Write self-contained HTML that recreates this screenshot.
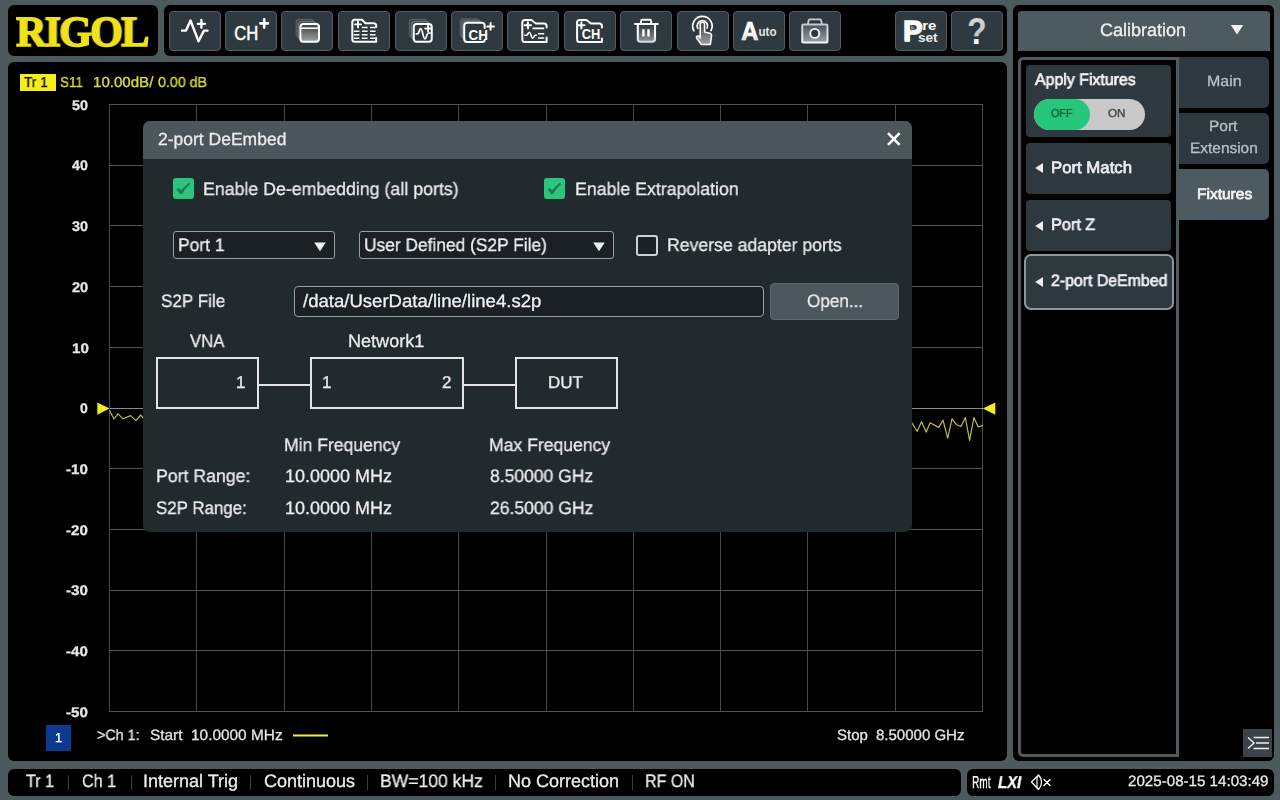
<!DOCTYPE html>
<html lang="en">
<head>
<meta charset="utf-8">
<title>RIGOL VNA - 2-port DeEmbed</title>
<style>
*{box-sizing:border-box;margin:0;padding:0}
html,body{width:1280px;height:800px;overflow:hidden;background:#4d5a5d}
body{position:relative;font-family:"Liberation Sans",sans-serif;color:#e8e8e8;font-size:17px}
.abs{position:absolute}
.blk{position:absolute;background:#000;border-radius:6px}
.t{position:absolute;white-space:nowrap;line-height:1;transform-origin:0 0;text-rendering:geometricPrecision;will-change:transform;-webkit-text-stroke:.3px}
/* toolbar buttons */
.tb{position:absolute;top:11px;width:52px;height:40px;background:#2f3a40;border:1px solid #515d62;border-radius:4px}
.tb svg{position:absolute;left:-1px;top:-1px}
/* right menu */
.mbtn{position:absolute;left:1026px;width:145px;background:#2e393f;border-radius:4px}
.tab{position:absolute;left:1179px;width:90px;height:51px;background:#2e393f;border-radius:0 5px 5px 0}
/* dialog */
#dlg{position:absolute;left:143px;top:121px;width:769px;height:411px;background:#212a2d;border-radius:7px;overflow:hidden}
#dlg .ttl{position:absolute;left:0;top:0;width:769px;height:38px;background:#4a565a}
.cb{position:absolute;width:21px;height:21px;border-radius:3px;background:#2bc57e}
.sel{position:absolute;height:28px;border:1px solid #9aa0a2;border-radius:3px;background:#1a2023}
.box{position:absolute;border:2px solid #e4e4e4}
</style>
</head>
<body>
<!-- logo -->
<div class="blk" style="left:8px;top:5px;width:150px;height:51px"></div>
<div class="t" id="logo" style="left:16px;top:11px;font-family:'Liberation Serif',serif;font-weight:bold;font-size:43px;color:#f0e21a;letter-spacing:-2px;-webkit-text-stroke:1.5px #f0e21a;transform:scaleX(.985)">RIGOL</div>
<!-- toolbar -->
<div class="blk" style="left:164px;top:5px;width:843px;height:51px"></div>
<!-- toolbar buttons -->
<div class="tb" style="left:169px"><svg width="52" height="40" viewBox="0 0 52 40" fill="none" stroke="#fff" stroke-width="2.400" stroke-linecap="round" stroke-linejoin="round"><path d="M13 19.6H17L21.5 9.5L29.500 30.300L35 19.6H38.500"/><path d="M28.800 12.800H36M32.400 9V16.800" stroke-width="2.300"/></svg></div>
<div class="tb" style="left:225px"><svg width="52" height="40" viewBox="0 0 52 40"><text x="9.200" y="28.800" font-family="Liberation Sans, sans-serif" font-size="19.800" fill="#fff" stroke="#fff" stroke-width=".5" textLength="24" lengthAdjust="spacingAndGlyphs">CH</text><path d="M35.400 12.400H43M39.200 8.300V16.600" stroke="#fff" stroke-width="2.600" stroke-linecap="round"/></svg></div>
<div class="tb" style="left:281px"><svg width="52" height="40" viewBox="0 0 52 40"><defs><linearGradient id="gw" x1="0" y1="0" x2="0" y2="1"><stop offset="0" stop-color="#353e42"/><stop offset="1" stop-color="#9ea4a6"/></linearGradient></defs><rect x="15.300" y="8.500" width="17.500" height="17.500" rx="3" fill="#3a4449" stroke="#525d62" stroke-width="1.400"/><rect x="17.300" y="10.600" width="17.500" height="17.500" rx="3" fill="#3a4449" stroke="#69747a" stroke-width="1.400"/><rect x="19.400" y="13" width="18.600" height="17.800" rx="3" fill="url(#gw)" stroke="#fff" stroke-width="2"/><path d="M19.400 17.200H38" stroke="#fff" stroke-width="1.500"/></svg></div>
<div class="tb" style="left:338px"><svg width="52" height="40" viewBox="0 0 52 40" fill="none" stroke="#fff" stroke-width="2" stroke-linecap="round" stroke-linejoin="round"><path d="M38.200 27V30.700H16.800Q14.300 30.700 14.300 28.200V11.200Q14.300 8.700 16.800 8.700H24L27.500 12.300H35.700Q38.200 12.300 38.200 14.800V16"/><path d="M17 13.400H23M20 10.400V16.400" stroke-width="1.900"/><path d="M23.900 16.500H38M15.750 20.200H38M15.750 23.700H38M15.750 27.200H38" stroke-width="1.600" stroke-dasharray="5.700 2.400" stroke-linecap="butt"/></svg></div>
<div class="tb" style="left:395px"><svg width="52" height="40" viewBox="0 0 52 40" fill="none" stroke-linecap="round" stroke-linejoin="round"><rect x="14.500" y="8.500" width="17.500" height="17.500" rx="3" fill="#3a4449" stroke="#525d62" stroke-width="1.400"/><rect x="16.600" y="10.600" width="17.500" height="17.500" rx="3" fill="#3a4449" stroke="#69747a" stroke-width="1.400"/><rect x="18.750" y="13" width="18" height="17.800" rx="3" fill="#2f3a40" stroke="#fff" stroke-width="2"/><path d="M21.300 22.800H22.500C24.500 22.800 24 17.600 25.700 17.600C27.600 17.600 28 27.800 30 27.800C31.700 27.800 31.600 22 33.500 22H35.300" stroke="#fff" stroke-width="1.700"/><path d="M30.200 17.500H36M33.100 14.600V20.400" stroke="#fff" stroke-width="1.800"/></svg></div>
<div class="tb" style="left:451px"><svg width="52" height="40" viewBox="0 0 52 40" fill="none" stroke-linecap="round" stroke-linejoin="round"><rect x="9.400" y="8" width="19" height="18" rx="3" fill="#3a4449" stroke="#525d62" stroke-width="1.400"/><rect x="11.300" y="9.900" width="19" height="18" rx="3" fill="#3a4449" stroke="#69747a" stroke-width="1.400"/><path d="M33.700 17V14.800Q33.700 11.800 30.700 11.800H16.200Q13.200 11.800 13.200 14.800V27.900Q13.200 30.900 16.200 30.900H30.700Q33.700 30.900 33.700 28.900" fill="#2f3a40" stroke="#fff" stroke-width="2"/><text x="17.600" y="28.500" font-family="Liberation Sans, sans-serif" font-weight="bold" font-size="15.500" fill="#fff" stroke="none" textLength="19.400" lengthAdjust="spacingAndGlyphs">CH</text><path d="M36.300 15.400H43M39.600 12V18.800" stroke="#fff" stroke-width="2"/></svg></div>
<div class="tb" style="left:507px"><svg width="52" height="40" viewBox="0 0 52 40" fill="none" stroke="#fff" stroke-width="2" stroke-linecap="round" stroke-linejoin="round"><path d="M39.600 26.500V30.900H17.800Q15.300 30.900 15.300 28.400V11.500Q15.300 9 17.800 9H24.400L28.800 12.500H37.100Q39.600 12.500 39.600 15V16.500"/><path d="M17.800 14.300H24M20.900 11.200V17.400" stroke-width="2.100"/><path d="M17.800 24.200H19.500C21 24.200 21 21.200 22.300 21.200C23.800 21.200 24.200 27.200 25.700 27.200C27 27.200 27 24.200 28.300 24.200H29.300" stroke-width="1.600"/><path d="M25.500 17.300H37.200M31 22.750H37.200M31 27H37.200" stroke-width="1.700" stroke-linecap="butt"/></svg></div>
<div class="tb" style="left:564px"><svg width="52" height="40" viewBox="0 0 52 40" fill="none" stroke="#fff" stroke-width="2" stroke-linecap="round" stroke-linejoin="round"><path d="M37.900 27.500V30.900H15.600Q13.100 30.900 13.100 28.400V11.500Q13.100 9 15.600 9H22.500L26.900 12.500H35.400Q37.900 12.500 37.900 15V16.500"/><path d="M14.300 14.300H20.500M17.400 11.200V17.400" stroke-width="2.100"/><text x="17.800" y="28.300" font-family="Liberation Sans, sans-serif" font-weight="bold" font-size="15.500" fill="#fff" stroke="none" textLength="18.600" lengthAdjust="spacingAndGlyphs">CH</text></svg></div>
<div class="tb" style="left:620px"><svg width="52" height="40" viewBox="0 0 52 40" fill="none" stroke-linecap="round" stroke-linejoin="round"><defs><linearGradient id="gt" x1="0" y1="0" x2="0" y2="1"><stop offset="0" stop-color="#fff"/><stop offset=".5" stop-color="#fff"/><stop offset="1" stop-color="#d5d8d9"/></linearGradient><linearGradient id="gt2" x1="0" y1="0" x2="0" y2="1"><stop offset="0" stop-color="#2f3a40"/><stop offset="1" stop-color="#8b9396"/></linearGradient></defs><path d="M21 12.500V10.300Q21 8.800 22.500 8.800H29.700Q31.200 8.800 31.200 10.300V12.500" stroke="#fff" stroke-width="1.900"/><path d="M15 13H37.700" stroke="#fff" stroke-width="2.200"/><path d="M17.800 14V28Q17.800 30.700 20.500 30.700H32.300Q35 30.700 35 28V14" stroke="url(#gt)" stroke-width="2.100" fill="url(#gt2)"/><path d="M23.400 18.200V25.600M28.500 18.200V25.600" stroke="#fff" stroke-width="2.400" stroke-linecap="butt"/></svg></div>
<div class="tb" style="left:677px"><svg width="52" height="40" viewBox="0 0 52 40" fill="none" stroke="#fff" stroke-width="1.700" stroke-linecap="round" stroke-linejoin="round"><defs><linearGradient id="gh" x1="0" y1="0" x2="0" y2="1"><stop offset="0" stop-color="#3a4449"/><stop offset="1" stop-color="#9aa1a4"/></linearGradient></defs><path d="M16.900 19.800A9.700 9.700 0 1 1 34 19.600"/><path d="M20.800 17.300A5.200 5.200 0 1 1 30.100 17.100"/><path d="M23.200 27V13.300Q23.200 11.300 25.400 11.300Q27.600 11.300 27.600 13.300V21L32.800 22.300Q34.800 22.800 34.500 25L33.300 33.500H24.300L19.800 27.300Q18.900 25.900 20.300 25.100Q21.500 24.600 22.400 25.800Z" fill="url(#gh)" stroke="#fff" stroke-width="1.600"/></svg></div>
<div class="tb" style="left:733px"><svg width="52" height="40" viewBox="0 0 52 40"><defs><linearGradient id="ga" x1="0" y1="0" x2="0" y2="1"><stop offset="0" stop-color="#fff"/><stop offset=".6" stop-color="#fff"/><stop offset="1" stop-color="#aeb4b6"/></linearGradient></defs><text x="8.200" y="28.500" font-family="Liberation Sans, sans-serif" font-weight="bold" font-size="25.800" fill="url(#ga)" stroke="#fff" stroke-width=".7" textLength="17.200" lengthAdjust="spacingAndGlyphs">A</text><text x="25.500" y="24.700" font-family="Liberation Sans, sans-serif" font-weight="bold" font-size="12.500" fill="#e4e6e7" textLength="18" lengthAdjust="spacingAndGlyphs">uto</text></svg></div>
<div class="tb" style="left:789px"><svg width="52" height="40" viewBox="0 0 52 40" fill="none" stroke-linecap="round" stroke-linejoin="round"><defs><linearGradient id="gc" x1="0" y1="0" x2="0" y2="1"><stop offset="0" stop-color="#475257"/><stop offset="1" stop-color="#9aa1a4"/></linearGradient><linearGradient id="gcs" x1="0" y1="0" x2="0" y2="1"><stop offset="0" stop-color="#c5c9cb"/><stop offset="1" stop-color="#f4f5f5"/></linearGradient></defs><path d="M19 12.500L19.700 9.300Q19.900 8.300 21 8.300H30.800Q31.900 8.300 32.100 9.300L32.800 12.500" stroke="#c9cdcf" stroke-width="1.800"/><rect x="13.250" y="13.400" width="25.200" height="18.100" rx="1" fill="url(#gc)" stroke="url(#gcs)" stroke-width="2"/><circle cx="25.750" cy="22.400" r="4.500" fill="#2f3a40" stroke="#f2f3f3" stroke-width="1.900"/></svg></div>
<div class="tb" style="left:895px"><svg width="52" height="40" viewBox="0 0 52 40"><text x="8.100" y="30.250" font-family="Liberation Sans, sans-serif" font-weight="bold" font-size="29.600" fill="#fff" stroke="#fff" stroke-width="1.300">P</text><path d="M16 14L20 17L16 20Z" fill="#7c858a"/><text x="27.300" y="18.500" font-family="Liberation Sans, sans-serif" font-weight="bold" font-size="12.600" fill="#fff" textLength="14" lengthAdjust="spacingAndGlyphs">re</text><text x="23" y="30.600" font-family="Liberation Sans, sans-serif" font-weight="bold" font-size="12.600" fill="#e9ebec" textLength="19.600" lengthAdjust="spacingAndGlyphs">set</text></svg></div>
<div class="tb" style="left:951px"><svg width="52" height="40" viewBox="0 0 52 40"><defs><linearGradient id="gq" x1="0" y1="0" x2="0" y2="1"><stop offset="0" stop-color="#e0e2e3"/><stop offset=".55" stop-color="#bfc4c6"/><stop offset=".8" stop-color="#fff"/><stop offset="1" stop-color="#fff"/></linearGradient></defs><text x="16.200" y="32.750" font-family="Liberation Sans, sans-serif" font-weight="bold" font-size="37.300" fill="url(#gq)" textLength="19.300" lengthAdjust="spacingAndGlyphs">?</text></svg></div>
<!-- plot panel -->
<div class="blk" style="left:8px;top:62px;width:999px;height:699px"></div>
<!-- right panel -->
<div class="blk" style="left:1013px;top:5px;width:261px;height:756px"></div>
<!-- status bars -->
<div class="blk" style="left:8px;top:769px;width:953px;height:27px"></div>
<div class="blk" style="left:967px;top:769px;width:307px;height:27px"></div>
<div class="abs" style="left:20px;top:74px;width:36px;height:17px;background:#f4ef1a"></div>
<svg class="abs" style="left:0;top:0" width="1280" height="800" viewBox="0 0 1280 800" fill="none"><g stroke="#474747" stroke-width="1" shape-rendering="crispEdges"><path d="M109.5 104.0V712.0"/><path d="M196.5 104.0V712.0"/><path d="M284.5 104.0V712.0"/><path d="M371.5 104.0V712.0"/><path d="M458.5 104.0V712.0"/><path d="M546.5 104.0V712.0"/><path d="M633.5 104.0V712.0"/><path d="M720.5 104.0V712.0"/><path d="M807.5 104.0V712.0"/><path d="M895.5 104.0V712.0"/><path d="M982.5 104.0V712.0"/></g><g stroke="#555" stroke-width="1" shape-rendering="crispEdges"><path d="M109.0 104.5H983.0"/><path d="M109.0 165.5H983.0"/><path d="M109.0 225.5H983.0"/><path d="M109.0 286.5H983.0"/><path d="M109.0 347.5H983.0"/><path d="M109.0 408.5H983.0"/><path d="M109.0 468.5H983.0"/><path d="M109.0 529.5H983.0"/><path d="M109.0 590.5H983.0"/><path d="M109.0 650.5H983.0"/><path d="M109.0 711.5H983.0"/></g><path d="M109.5 408.5H982.5" stroke="#8c8c8c" stroke-width="1" shape-rendering="crispEdges"/><path d="M109.5 410.5L114 419L118 413.8L123 418.8L130.600 415.600L136 420.600L140.600 415L143.500 418.500" stroke="#bcbc4a" stroke-width="1.2" stroke-linejoin="round"/><path d="M911 424L912 423.100L917.200 431.300L921.500 421.800L926.200 432.100L930.100 422.700L938.700 427.400L943 420.100L947.700 438.100L952 418.800L956.700 424.800L961 426.500L965.300 417.500L969.600 440.300L973.900 417.500L978.200 427L982.900 425.400" stroke="#bcbc4a" stroke-width="1.2" stroke-linejoin="round"/><path d="M97.3 402.500L109.500 408.500L97.300 414.800Z" fill="#f2ee1c"/><path d="M995.300 402.500L982.800 408.500L995.300 414.700Z" fill="#f2ee1c"/><path d="M293 735.600H328" stroke="#eeea50" stroke-width="2"/></svg>
<div class="abs" style="left:46px;top:725px;width:25px;height:26px;background:#0c3a8e"></div>
<div class="abs" style="left:68px;top:775px;width:1px;height:15px;background:#3c3c3c"></div><div class="abs" style="left:131px;top:775px;width:1px;height:15px;background:#3c3c3c"></div><div class="abs" style="left:250px;top:775px;width:1px;height:15px;background:#3c3c3c"></div><div class="abs" style="left:367px;top:775px;width:1px;height:15px;background:#3c3c3c"></div><div class="abs" style="left:495px;top:775px;width:1px;height:15px;background:#3c3c3c"></div><div class="abs" style="left:632px;top:775px;width:1px;height:15px;background:#3c3c3c"></div>
<svg class="abs" style="left:1028px;top:772px" width="26" height="20" viewBox="0 0 26 20" fill="none" stroke="#fff" stroke-width="1.200" stroke-linejoin="round" stroke-linecap="round"><path d="M3.500 10L10.500 3Q13.500 6 13.500 10.500Q13.500 14.500 10.500 17.500Z"/><path d="M9 4.500V16"/><path d="M16 7.500L22 13.500M22 7.500L16 13.500" stroke-width="1.400"/></svg>
<div class="abs" style="left:1018px;top:11px;width:252px;height:40px;background:#4d5a5f;border-radius:4px 4px 0 0"></div>
<svg class="abs" style="left:1229px;top:23px" width="16" height="13" viewBox="0 0 16 13"><path d="M1.800 2H14.200L8 11.500Z" fill="#f2f2f2"/></svg>
<div class="abs" style="left:1018px;top:57px;width:161px;height:700px;border:3px solid #4d5a5f;border-radius:5px 0 0 5px"></div>
<div class="tab" style="top:57px"></div><div class="tab" style="top:113px"></div><div class="tab" style="top:169px;background:#4d5a5f"></div>
<div class="mbtn" style="top:65px;height:72px"></div><div class="mbtn" style="top:143px;height:51px"></div><div class="mbtn" style="top:200px;height:51px"></div><div class="mbtn" style="left:1024px;top:253.500px;width:150px;height:56px;border:2px solid #8c969b;border-radius:7px"></div>
<div class="abs" style="left:1034px;top:99px;width:111px;height:31px;border-radius:16px;background:#c9c9c9;overflow:hidden"><div class="abs" style="left:0;top:0;width:56px;height:31px;border-radius:16px;background:#26c77b"></div></div>
<svg class="abs" style="left:1034px;top:162.2px" width="10" height="12" viewBox="0 0 10 12"><path d="M9 1V11L1.200 6Z" fill="#eee"/></svg><svg class="abs" style="left:1034px;top:219.8px" width="10" height="12" viewBox="0 0 10 12"><path d="M9 1V11L1.200 6Z" fill="#eee"/></svg><svg class="abs" style="left:1034px;top:275.8px" width="10" height="12" viewBox="0 0 10 12"><path d="M9 1V11L1.200 6Z" fill="#eee"/></svg>
<div class="abs" style="left:1243px;top:729px;width:29px;height:28px;background:#3a4448"></div><svg class="abs" style="left:1243px;top:729px" width="29" height="28" viewBox="0 0 29 28" fill="none" stroke="#f0f0f0" stroke-width="1.400"><path d="M5 8.500L11 14L5 19.500"/><path d="M10.500 8.500H26M13 14H26M10.500 19.500H26"/></svg>
<div id="dlg"><div class="ttl"></div></div>
<svg class="abs" style="left:884px;top:129px" width="20" height="20" viewBox="0 0 20 20"><path d="M4 4.200L15.600 15.800M15.600 4.200L4 15.800" stroke="#fff" stroke-width="2.600"/></svg>
<div class="cb" style="left:173px;top:178px"><svg width="21" height="21" viewBox="0 0 21 21" style="position:absolute;left:0;top:0"><path d="M3.500 11.200L6 9.800L8 12.500Q11.500 7.800 16 4.700L17.100 6Q12.400 10.200 9 16H6.900Q5.700 13.500 3.500 11.200Z" fill="#1f7a51"/></svg></div><div class="cb" style="left:544px;top:178px"><svg width="21" height="21" viewBox="0 0 21 21" style="position:absolute;left:0;top:0"><path d="M3.500 11.200L6 9.800L8 12.500Q11.500 7.800 16 4.700L17.100 6Q12.400 10.200 9 16H6.900Q5.700 13.500 3.500 11.200Z" fill="#1f7a51"/></svg></div>
<div class="sel" style="left:173px;top:231px;width:162px"><svg width="16" height="12" viewBox="0 0 16 12" style="position:absolute;right:6.300px;top:9px"><path d="M2.200 1.500H13.800L8 10.300Z" fill="#f0f0f0"/></svg></div><div class="sel" style="left:359px;top:231px;width:255px"><svg width="16" height="12" viewBox="0 0 16 12" style="position:absolute;right:6.300px;top:9px"><path d="M2.200 1.500H13.800L8 10.300Z" fill="#f0f0f0"/></svg></div>
<div class="abs" style="left:636px;top:235px;width:22px;height:21px;border:2px solid #cfd2d3;border-radius:3px;background:#1c2326"></div>
<div class="sel" style="left:294px;top:286px;width:470px;height:31px;border-radius:4px"></div>
<div class="abs" style="left:770px;top:283px;width:129px;height:37px;background:#4b575b;border:1px solid #5d696e;border-radius:4px"></div>
<div class="box" style="left:156px;top:357px;width:103px;height:52px"></div><div class="box" style="left:310px;top:357px;width:154px;height:52px"></div><div class="box" style="left:515px;top:357px;width:103px;height:52px"></div><div class="abs" style="left:259px;top:384px;width:51px;height:2px;background:#e4e4e4"></div><div class="abs" style="left:464px;top:384px;width:51px;height:2px;background:#e4e4e4"></div>
<!-- text -->
<span class="t" style="left:23.9px;top:76.0px;font-size:14.5px;transform:scaleX(0.940);color:#111">Tr 1</span>
<span class="t" style="left:59.8px;top:76.0px;font-size:14.5px;transform:scaleX(0.925);color:#dede3c">S11</span>
<span class="t" style="left:93.2px;top:76.0px;font-size:14.5px;transform:scaleX(1.040);color:#dede3c">10.00dB/</span>
<span class="t" style="left:158.0px;top:76.0px;font-size:14.5px;transform:scaleX(0.981);color:#dede3c">0.00 dB</span>
<span class="t" style="left:72.2px;top:98.0px;font-size:14px;transform:scaleX(1.028);font-weight:bold;color:#e6e6e6">50</span>
<span class="t" style="left:72.4px;top:158.0px;font-size:14px;transform:scaleX(1.013);font-weight:bold;color:#e6e6e6">40</span>
<span class="t" style="left:72.2px;top:219.0px;font-size:14px;transform:scaleX(1.028);font-weight:bold;color:#e6e6e6">30</span>
<span class="t" style="left:71.9px;top:280.0px;font-size:14px;transform:scaleX(1.043);font-weight:bold;color:#e6e6e6">20</span>
<span class="t" style="left:71.5px;top:341.0px;font-size:14px;transform:scaleX(1.076);font-weight:bold;color:#e6e6e6">10</span>
<span class="t" style="left:80.4px;top:401.0px;font-size:14px;font-weight:bold;color:#e6e6e6">0</span>
<span class="t" style="left:66.4px;top:462.0px;font-size:14px;transform:scaleX(1.076);font-weight:bold;color:#e6e6e6">-10</span>
<span class="t" style="left:66.4px;top:523.0px;font-size:14px;transform:scaleX(1.076);font-weight:bold;color:#e6e6e6">-20</span>
<span class="t" style="left:66.4px;top:583.0px;font-size:14px;transform:scaleX(1.076);font-weight:bold;color:#e6e6e6">-30</span>
<span class="t" style="left:66.4px;top:644.0px;font-size:14px;transform:scaleX(1.076);font-weight:bold;color:#e6e6e6">-40</span>
<span class="t" style="left:66.4px;top:705.0px;font-size:14px;transform:scaleX(1.076);font-weight:bold;color:#e6e6e6">-50</span>
<span class="t" style="left:54.7px;top:731.0px;font-size:13px;color:#fff">1</span>
<span class="t" style="left:97.2px;top:728.0px;font-size:15px;transform:scaleX(0.956);color:#e4e4e4">&gt;Ch 1:</span>
<span class="t" style="left:149.9px;top:728.0px;font-size:15px;transform:scaleX(1.024);color:#e4e4e4">Start</span>
<span class="t" style="left:190.7px;top:728.0px;font-size:15px;transform:scaleX(1.027);color:#e4e4e4">10.0000 MHz</span>
<span class="t" style="left:836.8px;top:728.0px;font-size:15px;color:#e4e4e4">Stop</span>
<span class="t" style="left:875.9px;top:728.0px;font-size:15px;color:#e4e4e4">8.50000 GHz</span>
<span class="t" style="left:26.1px;top:772.0px;font-size:18px;transform:scaleX(0.897);color:#ececec">Tr 1</span>
<span class="t" style="left:82.1px;top:772.0px;font-size:18px;transform:scaleX(0.897);color:#ececec">Ch 1</span>
<span class="t" style="left:143.0px;top:772.0px;font-size:18px;color:#ececec">Internal Trig</span>
<span class="t" style="left:263.6px;top:772.0px;font-size:18px;color:#ececec">Continuous</span>
<span class="t" style="left:380.0px;top:772.0px;font-size:18px;transform:scaleX(0.975);color:#ececec">BW=100 kHz</span>
<span class="t" style="left:508.0px;top:772.0px;font-size:18px;color:#ececec">No Correction</span>
<span class="t" style="left:645.2px;top:772.0px;font-size:18px;transform:scaleX(0.889);color:#ececec">RF ON</span>
<span class="t" style="left:971.6px;top:774.0px;font-size:17.3px;transform:scaleX(0.585);color:#fff">Rmt</span>
<span class="t" style="left:998.2px;top:774.0px;font-size:17px;transform:scaleX(0.875);color:#fff;font-weight:bold;font-style:italic">LXI</span>
<span class="t" style="left:1128.4px;top:774.0px;font-size:15px;transform:scaleX(1.009);color:#ececec">2025-08-15 14:03:49</span>
<span class="t" style="left:1100.4px;top:21.0px;font-size:18px;color:#f0f0f0">Calibration</span>
<span class="t" style="left:1206.7px;top:74.0px;font-size:15px;transform:scaleX(1.064);color:#b9c0c2">Main</span>
<span class="t" style="left:1209.2px;top:119.0px;font-size:15px;transform:scaleX(1.031);color:#b9c0c2">Port</span>
<span class="t" style="left:1190.2px;top:141.0px;font-size:15px;transform:scaleX(1.029);color:#b9c0c2">Extension</span>
<span class="t" style="left:1196.7px;top:187.0px;font-size:15px;transform:scaleX(1.034);color:#f4f4f4;-webkit-text-stroke:.7px #f4f4f4">Fixtures</span>
<span class="t" style="left:1034.9px;top:72.0px;font-size:16.5px;transform:scaleX(0.964);color:#f4f4f4;-webkit-text-stroke:.7px #f4f4f4">Apply Fixtures</span>
<span class="t" style="left:1050.5px;top:109.0px;font-size:11.5px;transform:scaleX(0.933);color:#0d5a33">OFF</span>
<span class="t" style="left:1108.4px;top:109.0px;font-size:11.5px;transform:scaleX(1.016);color:#3d3d3d">ON</span>
<span class="t" style="left:1050.6px;top:160.0px;font-size:16.5px;transform:scaleX(1.015);color:#eceeef;-webkit-text-stroke:.7px #eceeef">Port Match</span>
<span class="t" style="left:1050.6px;top:217.0px;font-size:16.5px;transform:scaleX(0.985);color:#eceeef;-webkit-text-stroke:.7px #eceeef">Port Z</span>
<span class="t" style="left:1051.2px;top:273.0px;font-size:16.5px;transform:scaleX(0.961);color:#eceeef;-webkit-text-stroke:.7px #eceeef">2-port DeEmbed</span>
<span class="t" style="left:158.3px;top:131.0px;font-size:17.5px;color:#ececec">2-port DeEmbed</span>
<span class="t" style="left:203.0px;top:180.0px;font-size:18px;transform:scaleX(0.986);color:#ececec">Enable De-embedding (all ports)</span>
<span class="t" style="left:574.6px;top:180.0px;font-size:18px;transform:scaleX(0.986);color:#ececec">Enable Extrapolation</span>
<span class="t" style="left:178.4px;top:236.0px;font-size:18px;transform:scaleX(0.970);color:#f0f0f0">Port 1</span>
<span class="t" style="left:363.7px;top:236.0px;font-size:18px;transform:scaleX(0.964);color:#f0f0f0">User Defined (S2P File)</span>
<span class="t" style="left:667.4px;top:236.0px;font-size:18px;transform:scaleX(0.981);color:#ececec">Reverse adapter ports</span>
<span class="t" style="left:161.1px;top:292.0px;font-size:18px;transform:scaleX(0.948);color:#ececec">S2P File</span>
<span class="t" style="left:303.2px;top:292.0px;font-size:18px;transform:scaleX(1.031);color:#f0f0f0">/data/UserData/line/line4.s2p</span>
<span class="t" style="left:806.5px;top:292.0px;font-size:18px;transform:scaleX(0.951);color:#ececec">Open...</span>
<span class="t" style="left:190.4px;top:332.0px;font-size:18px;transform:scaleX(0.930);color:#ececec">VNA</span>
<span class="t" style="left:347.7px;top:332.0px;font-size:18px;transform:scaleX(1.004);color:#ececec">Network1</span>
<span class="t" style="left:236.0px;top:374.0px;font-size:17px;color:#ececec">1</span>
<span class="t" style="left:321.8px;top:374.0px;font-size:17px;color:#ececec">1</span>
<span class="t" style="left:441.6px;top:374.0px;font-size:17px;color:#ececec">2</span>
<span class="t" style="left:548.4px;top:374.0px;font-size:17px;color:#ececec">DUT</span>
<span class="t" style="left:283.7px;top:436.0px;font-size:18px;transform:scaleX(0.976);color:#ececec">Min Frequency</span>
<span class="t" style="left:489.0px;top:436.0px;font-size:18px;transform:scaleX(0.977);color:#ececec">Max Frequency</span>
<span class="t" style="left:155.5px;top:467.0px;font-size:18px;transform:scaleX(0.983);color:#ececec">Port Range:</span>
<span class="t" style="left:284.6px;top:467.0px;font-size:18px;color:#ececec">10.0000 MHz</span>
<span class="t" style="left:489.9px;top:467.0px;font-size:18px;transform:scaleX(0.973);color:#ececec">8.50000 GHz</span>
<span class="t" style="left:156.4px;top:499.0px;font-size:18px;transform:scaleX(0.938);color:#ececec">S2P Range:</span>
<span class="t" style="left:284.6px;top:499.0px;font-size:18px;color:#ececec">10.0000 MHz</span>
<span class="t" style="left:489.6px;top:499.0px;font-size:18px;transform:scaleX(0.975);color:#ececec">26.5000 GHz</span>
</body>
</html>
